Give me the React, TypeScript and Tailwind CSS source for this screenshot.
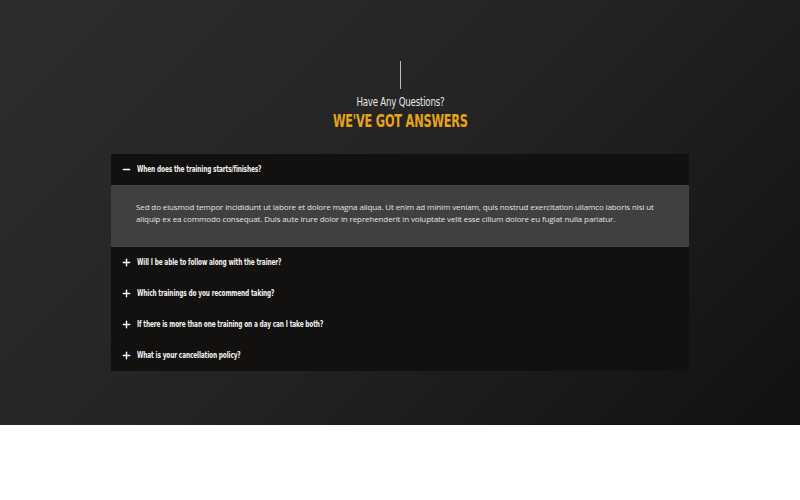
import { Minus, Plus } from "lucide-react";

const faqs = [
  {
    q: "When does the training starts/finishes?",
    a: "Sed do eiusmod tempor incididunt ut labore et dolore magna aliqua. Ut enim ad minim veniam, quis nostrud exercitation ullamco laboris nisi ut aliquip ex ea commodo consequat. Duis aute irure dolor in reprehenderit in voluptate velit esse cillum dolore eu fugiat nulla pariatur.",
    open: true,
  },
  { q: "Will I be able to follow along with the trainer?" },
  { q: "Which trainings do you recommend taking?" },
  { q: "If there is more than one training on a day can I take both?" },
  { q: "What is your cancellation policy?" },
];

// narrow display face stand-in (no Oswald offline)
const heading = "font-['DejaVu_Sans_Condensed','Liberation_Sans_Narrow',sans-serif]";

export default function App() {
  return (
    <div className="min-h-[500px] bg-white">
      <section className="h-[425px] bg-[linear-gradient(135deg,#2d2d2d_0%,#232323_50%,#121110_100%)] flex flex-col items-center pt-[61px]">
        <div className="w-px h-[28px] bg-[#bdbdbd]" />
        <p className={`${heading} mt-[5px] text-[13px] leading-[16px] text-[#e6e6e6] tracking-[-0.3px] scale-x-[0.74]`}>
          Have Any Questions?
        </p>
        <h2 className={`${heading} text-[18px] leading-[22px] font-bold text-[#e8a31b] tracking-[-0.3px] scale-x-[0.7]`}>
          WE'VE GOT ANSWERS
        </h2>

        <div className="mt-[22px] w-[578px] bg-[#121110]">
          {faqs.map((f) => (
            <div key={f.q}>
              <div className="h-[31px] flex items-center pl-[10px] gap-[5px]">
                {f.open ? (
                  <Minus size={11} strokeWidth={3} className="text-white shrink-0" />
                ) : (
                  <Plus size={11} strokeWidth={3} className="text-white shrink-0" />
                )}
                <span className={`${heading} inline-block origin-left scale-x-[0.72] whitespace-nowrap text-[9px] font-bold text-[#f2f2f2] tracking-[-0.2px]`}>
                  {f.q}
                </span>
              </div>
              {f.open && (
                <div className="bg-[#404040] h-[62px] pl-[25px] pr-[26px] pt-[16px]">
                  <p className="font-['Open_Sans',sans-serif] text-[8px] leading-[12px] tracking-[-0.12px] text-[#e3e3e3]">{f.a}</p>
                </div>
              )}
            </div>
          ))}
        </div>
      </section>
    </div>
  );
}
